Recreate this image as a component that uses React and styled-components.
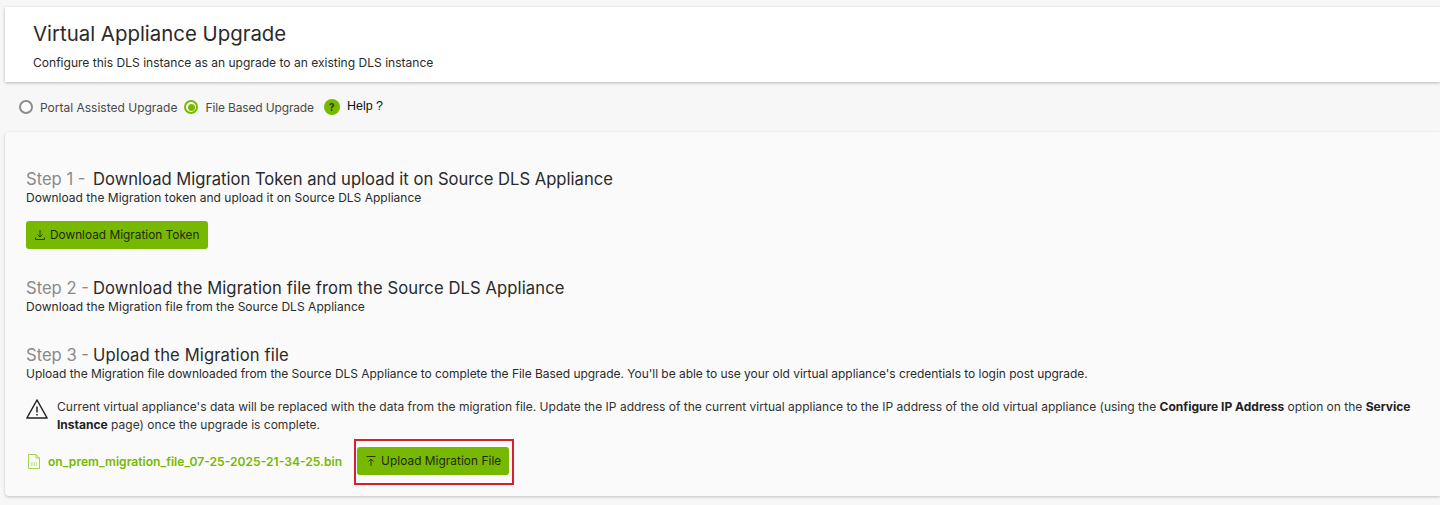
import styled, { createGlobalStyle } from "styled-components";

const GlobalStyle = createGlobalStyle`
  html, body {
    margin: 0;
    padding: 0;
    background: #f7f7f7;
    color: #202020;
    font-family: Inter, "Noto Sans", "Liberation Sans", sans-serif;
  }
`;

const Page = styled.div`
  width: 1440px;
  height: 505px;
  overflow: hidden;
  padding: 7px 0 0 5px;
  box-sizing: border-box;
`;

const Header = styled.header`
  height: 75px;
  background: #fff;
  box-shadow: 0 1px 3px rgba(0, 0, 0, 0.25);
  padding: 14px 0 0 28px;
  box-sizing: border-box;
`;

const Title = styled.h1`
  margin: 0;
  font-size: 20.4px;
  line-height: 26px;
  font-weight: 400;
  color: #2a2a2a;
`;

const Subtitle = styled.p`
  margin: 8px 0 0;
  font-size: 12.06px;
  line-height: 16px;
  color: #2b2b2b;
`;

const RadioRow = styled.div`
  display: flex;
  align-items: center;
  height: 50px;
  padding-left: 14px;
  font-size: 12px;
  color: #4a4a4a;
`;

const Radio = styled.span`
  width: 14px;
  height: 14px;
  border-radius: 50%;
  box-sizing: border-box;
  background: #fff;
  border: 2px solid ${(p) => (p.$checked ? "#76b900" : "#8c8c8c")};
  display: flex;
  align-items: center;
  justify-content: center;
  margin-right: 7px;
  &::after {
    content: "";
    display: ${(p) => (p.$checked ? "block" : "none")};
    width: 7px;
    height: 7px;
    border-radius: 50%;
    background: #76b900;
  }
`;

const RadioLabel = styled.span`
  margin-right: ${(p) => p.$gap}px;
  letter-spacing: ${(p) => p.$tight || 0}px;
`;

const HelpDot = styled.span`
  width: 16px;
  height: 16px;
  border-radius: 50%;
  background: #76b900;
  color: #2a3a00;
  font-size: 10px;
  font-weight: 700;
  display: flex;
  align-items: center;
  justify-content: center;
  margin-right: 7px;
`;

const HelpText = styled.span`
  font-family: "Liberation Sans", Arial, sans-serif;
  font-size: 12.5px;
  color: #111;
  margin-bottom: 2px;
`;

const Panel = styled.section`
  height: 364px;
  background: #fafafa;
  border-radius: 4px 0 0 4px;
  box-shadow: 0 1px 3px rgba(0, 0, 0, 0.22);
  padding: 36px 20px 0 21px;
  box-sizing: border-box;
`;

const StepTitle = styled.h2`
  margin: 0;
  font-size: 16.6px;
  line-height: 22px;
  font-weight: 400;
  color: #2a2a2a;
  letter-spacing: ${(p) => p.$spacing || 0}px;
`;

const StepNo = styled.span`
  display: inline-block;
  width: 67px;
  color: #8a8a8a;
  letter-spacing: 0;
`;

const StepText = styled.p`
  margin: 0;
  font-size: 12px;
  line-height: 16px;
  color: #2b2b2b;
  letter-spacing: ${(p) => p.$spacing || 0}px;
`;

const GreenButton = styled.button`
  display: inline-flex;
  align-items: center;
  gap: 4px;
  height: 28px;
  padding: 0 8px;
  border: none;
  border-radius: 3px;
  background: #76b900;
  color: #1f2a00;
  font-family: inherit;
  font-size: 11.85px;
  letter-spacing: ${(p) => p.$spacing || 0}px;
`;

const StepOne = styled.div`
  height: 109px;
`;

const StepTwo = styled.div`
  height: 67px;
`;

const ButtonSlot = styled.div`
  margin-top: 15px;
`;

const Warning = styled.div`
  display: flex;
  gap: 9px;
  margin-top: 16px;
  font-size: 12.03px;
  line-height: 18px;
  color: #333;
  b {
    font-weight: 700;
    color: #222;
  }
`;

const WarnIcon = styled.svg`
  flex: none;
  margin-top: 1px;
`;

const FileIcon = styled.svg`
  flex: none;
  margin: 0 0 2px 2px;
`;

const UploadRow = styled.div`
  display: flex;
  align-items: center;
  margin-top: 5px;
`;

const FileName = styled.span`
  margin: 0 12px 2px 8px;
  font-size: 12.1px;
  font-weight: 600;
  color: #76b900;
`;

const Highlight = styled.div`
  border: 2px solid #d81f2e;
  padding: 6px 3px 8px 1px;
  display: flex;
`;

export default function App() {
  return (
    <>
      <GlobalStyle />
      <Page>
        <Header>
          <Title>Virtual Appliance Upgrade</Title>
          <Subtitle>Configure this DLS instance as an upgrade to an existing DLS instance</Subtitle>
        </Header>

        <RadioRow>
          <Radio />
          <RadioLabel $gap={7}>Portal Assisted Upgrade</RadioLabel>
          <Radio $checked />
          <RadioLabel $gap={10} $tight={-0.15}>File Based Upgrade</RadioLabel>
          <HelpDot>?</HelpDot>
          <HelpText>Help ?</HelpText>
        </RadioRow>

        <Panel>
          <StepOne>
            <StepTitle><StepNo>Step 1 -</StepNo>Download Migration Token and upload it on Source DLS Appliance</StepTitle>
            <StepText $spacing={0.015}>Download the Migration token and upload it on Source DLS Appliance</StepText>
            <ButtonSlot>
              <GreenButton>
                <svg width="12" height="12" viewBox="0 0 12 12" fill="none" stroke="#2a3a00" strokeWidth="1">
                  <path d="M6 1v7M3.5 5.5L6 8l2.5-2.5M1.5 8.5v2h9v-2" />
                </svg>
                Download Migration Token
              </GreenButton>
            </ButtonSlot>
          </StepOne>

          <StepTwo>
            <StepTitle $spacing={0.1}><StepNo>Step 2 -</StepNo>Download the Migration file from the Source DLS Appliance</StepTitle>
            <StepText $spacing={0.035}>Download the Migration file from the Source DLS Appliance</StepText>
          </StepTwo>

          <StepTitle $spacing={0.12}><StepNo>Step 3 -</StepNo>Upload the Migration file</StepTitle>
          <StepText $spacing={-0.037}>
            Upload the Migration file downloaded from the Source DLS Appliance to complete the File Based upgrade. You'll be able to use your old virtual appliance's credentials to login post upgrade.
          </StepText>

          <Warning>
            <WarnIcon width="22" height="20" viewBox="0 0 22 20" fill="none" stroke="#222" strokeWidth="1.5">
              <path d="M11 1L.9 19h20.2z" strokeLinejoin="round" />
              <path d="M11 7.5v6M11 15v1.6" />
            </WarnIcon>
            <div>
              Current virtual appliance's data will be replaced with the data from the migration file. Update the IP address of the current virtual appliance to the IP address of the old virtual appliance (using the <b>Configure IP Address</b> option on the <b>Service Instance</b> page) once the upgrade is complete.
            </div>
          </Warning>

          <UploadRow>
            <FileIcon width="12" height="15" viewBox="0 0 12 15" fill="none" stroke="#a5d34f" strokeWidth="1">
              <path d="M.5.5h7.5l3.5 3.5v10.5h-11zM8 .5V4h3.5" />
              <path d="M3 9h6M3 11h6" strokeDasharray="1.5 1" />
            </FileIcon>
            <FileName>on_prem_migration_file_07-25-2025-21-34-25.bin</FileName>
            <Highlight>
              <GreenButton $spacing={0.05}>
                <svg width="12" height="12" viewBox="0 0 12 12" fill="none" stroke="#2a3a00" strokeWidth="1">
                  <path d="M1.5 1.5h9M6 11V4M3.5 6.5L6 4l2.5 2.5" />
                </svg>
                Upload Migration File
              </GreenButton>
            </Highlight>
          </UploadRow>
        </Panel>
      </Page>
    </>
  );
}
